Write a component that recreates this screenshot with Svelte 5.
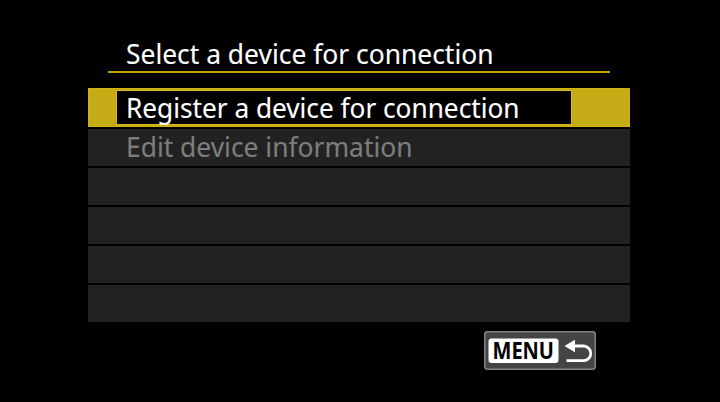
<script lang="ts">
  type Item = { label: string; width: number; disabled?: boolean };

  const title = 'Select a device for connection';
  // width is the drawn length of the condensed label, in px
  const items: (Item | null)[] = [
    { label: 'Register a device for connection', width: 393.5 },
    { label: 'Edit device information', width: 286.5, disabled: true },
    null,
    null,
    null,
    null,
  ];

  let selected = $state(0);
</script>

{#snippet label(text: string, width: number)}
  <svg class="label" width="440" height="40">
    <text x="0" y="30" textLength={width} lengthAdjust="spacingAndGlyphs">{text}</text>
  </svg>
{/snippet}

<main class="screen">
  <header class="title">
    {@render label(title, 367.5)}
  </header>

  <ul class="menu">
    {#each items as item, idx (idx)}
      <li class="row" class:selected={idx === selected} class:disabled={item?.disabled}>
        {#if item}
          <div class="field">{@render label(item.label, item.width)}</div>
        {/if}
      </li>
    {/each}
  </ul>

  <footer>
    <button class="back" aria-label="Menu, back">
      <svg width="112" height="39" viewBox="0 0 112 39">
        <rect class="key" x="4.5" y="7.5" width="70" height="24.5" rx="3" />
        <text class="key-text" x="8.5" y="27.5" textLength="61.5" lengthAdjust="spacingAndGlyphs">MENU</text>
        <path class="arrow" d="M88 15H99.5A7.3 7.3 0 0 1 99.5 29.6H82.5" />
        <path class="head" d="M80.5 15L91 8.8V21.2Z" />
      </svg>
    </button>
  </footer>
</main>

<style>
  :global(body) {
    background: #000;
  }
  .screen {
    box-sizing: border-box;
    width: 720px;
    height: 402px;
    padding: 34px 90px 0 88px;
    background: #000;
    color: #fff;
    font-family: 'Noto Sans', 'Open Sans', sans-serif;
    font-size: 27.5px;
  }
  .title {
    height: 37px;
    margin: 0 20px;
    padding-left: 18px;
    border-bottom: 2px solid #c0a30d;
  }
  .label {
    display: block;
    overflow: visible;
  }
  .label text {
    fill: currentColor;
    stroke: currentColor;
    stroke-width: 0.12px;
  }
  .menu {
    margin: 15px 0 0;
    padding: 0;
    list-style: none;
  }
  .row {
    box-sizing: border-box;
    height: 39px;
    padding-left: 29px;
    background: #222;
    border-top: 2px solid #000;
  }
  .row.selected {
    padding: 1px 0 0 27px;
    background: #c5ab15;
    border: 1px solid #d0b217;
  }
  .field {
    display: flex;
    align-items: flex-start;
    box-sizing: border-box;
    width: 456px;
    height: 35px;
    padding-left: 9px;
  }
  .field .label {
    margin-top: -2px;
  }
  .selected .field {
    background: #000;
    border: 1px solid #d9ba18;
  }
  .selected .label {
    margin-top: -3px;
  }
  .disabled {
    color: #7d7d7d;
  }
  footer {
    display: flex;
    justify-content: flex-end;
    margin: 9px 34px 0 0;
  }
  .back {
    box-sizing: border-box;
    width: 112px;
    height: 39px;
    padding: 0;
    overflow: hidden;
    background: #444;
    border: 0;
    border-radius: 4px;
    box-shadow: inset 0 0 0 1.5px #858585;
    font: inherit;
  }
  .back svg {
    display: block;
  }
  .key {
    fill: #fff;
  }
  .key-text {
    fill: #000;
    font-size: 22.5px;
    font-weight: 700;
  }
  .arrow {
    fill: none;
    stroke: #fff;
    stroke-width: 2.8;
  }
  .head {
    fill: #fff;
  }
</style>
